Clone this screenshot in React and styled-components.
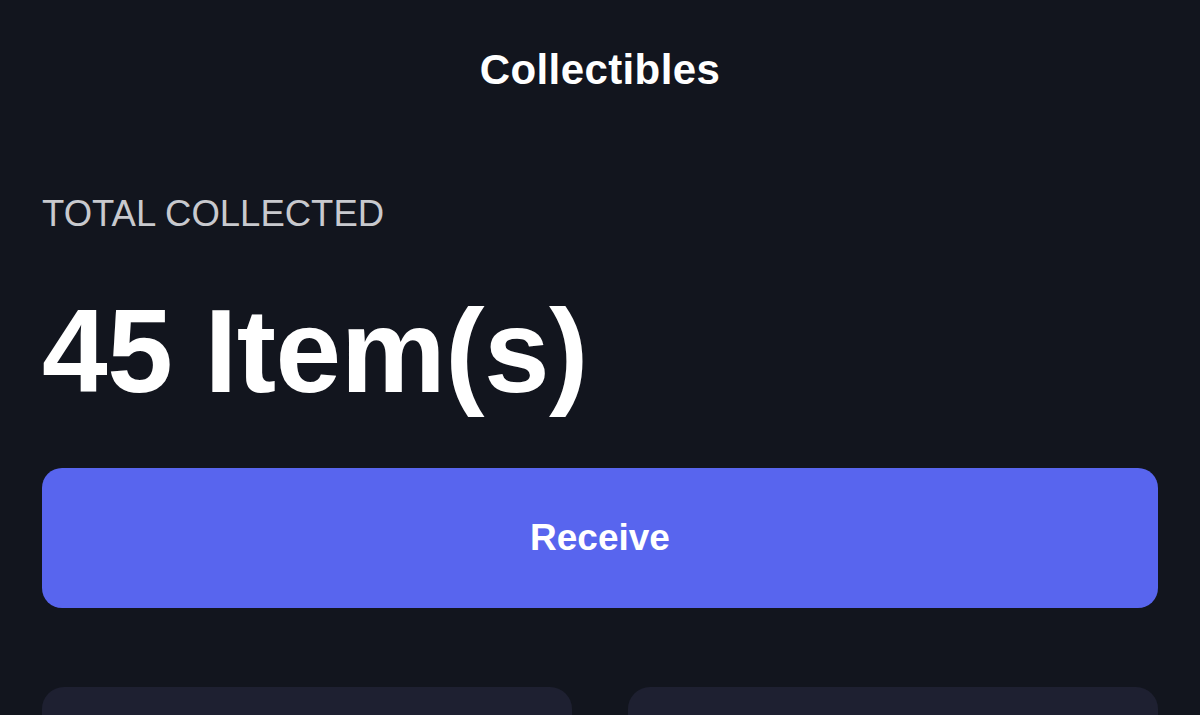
import React from 'react';
import styled, { createGlobalStyle } from 'styled-components';

const GlobalStyle = createGlobalStyle`
  html, body {
    margin: 0;
    padding: 0;
    background: #12151e;
  }
  body {
    font-family: "Liberation Sans", Arial, sans-serif;
    color: #fff;
  }
`;

const Page = styled.div`
  height: 715px;
  background: #12151e;
  padding: 0 42px;
  box-sizing: border-box;
  overflow: hidden;
`;

const Header = styled.header`
  height: 140px;
  display: flex;
  align-items: center;
  justify-content: center;
`;

const Title = styled.h1`
  margin: 0;
  font-size: 42px;
  font-weight: 700;
  letter-spacing: 0.4px;
  color: #ffffff;
`;

const Summary = styled.section`
  display: flex;
  flex-direction: column;
`;

const Label = styled.div`
  margin-top: 54px;
  font-size: 36.5px;
  font-weight: 400;
  color: #c8c9ce;
  line-height: 40px;
`;

const Count = styled.div`
  margin-top: 57px;
  font-size: 118px;
  font-weight: 700;
  line-height: 120px;
  letter-spacing: -0.5px;
  color: #ffffff;
`;

const ReceiveButton = styled.button`
  margin-top: 57px;
  width: 100%;
  height: 140px;
  border: none;
  border-radius: 20px;
  background: #5865ee;
  color: #ffffff;
  font-family: inherit;
  font-size: 37px;
  font-weight: 700;
  cursor: pointer;
`;

const Grid = styled.div`
  margin-top: 79px;
  display: grid;
  grid-template-columns: 1fr 1fr;
  gap: 56px;
`;

const Card = styled.div`
  height: 220px;
  border-radius: 22px;
  background: #1e2031;
`;

export default function App() {
  return (
    <>
      <GlobalStyle />
      <Page>
        <Header>
          <Title>Collectibles</Title>
        </Header>
        <Summary>
          <Label>TOTAL COLLECTED</Label>
          <Count>45 Item(s)</Count>
          <ReceiveButton>Receive</ReceiveButton>
        </Summary>
        <Grid>
          <Card />
          <Card />
        </Grid>
      </Page>
    </>
  );
}
